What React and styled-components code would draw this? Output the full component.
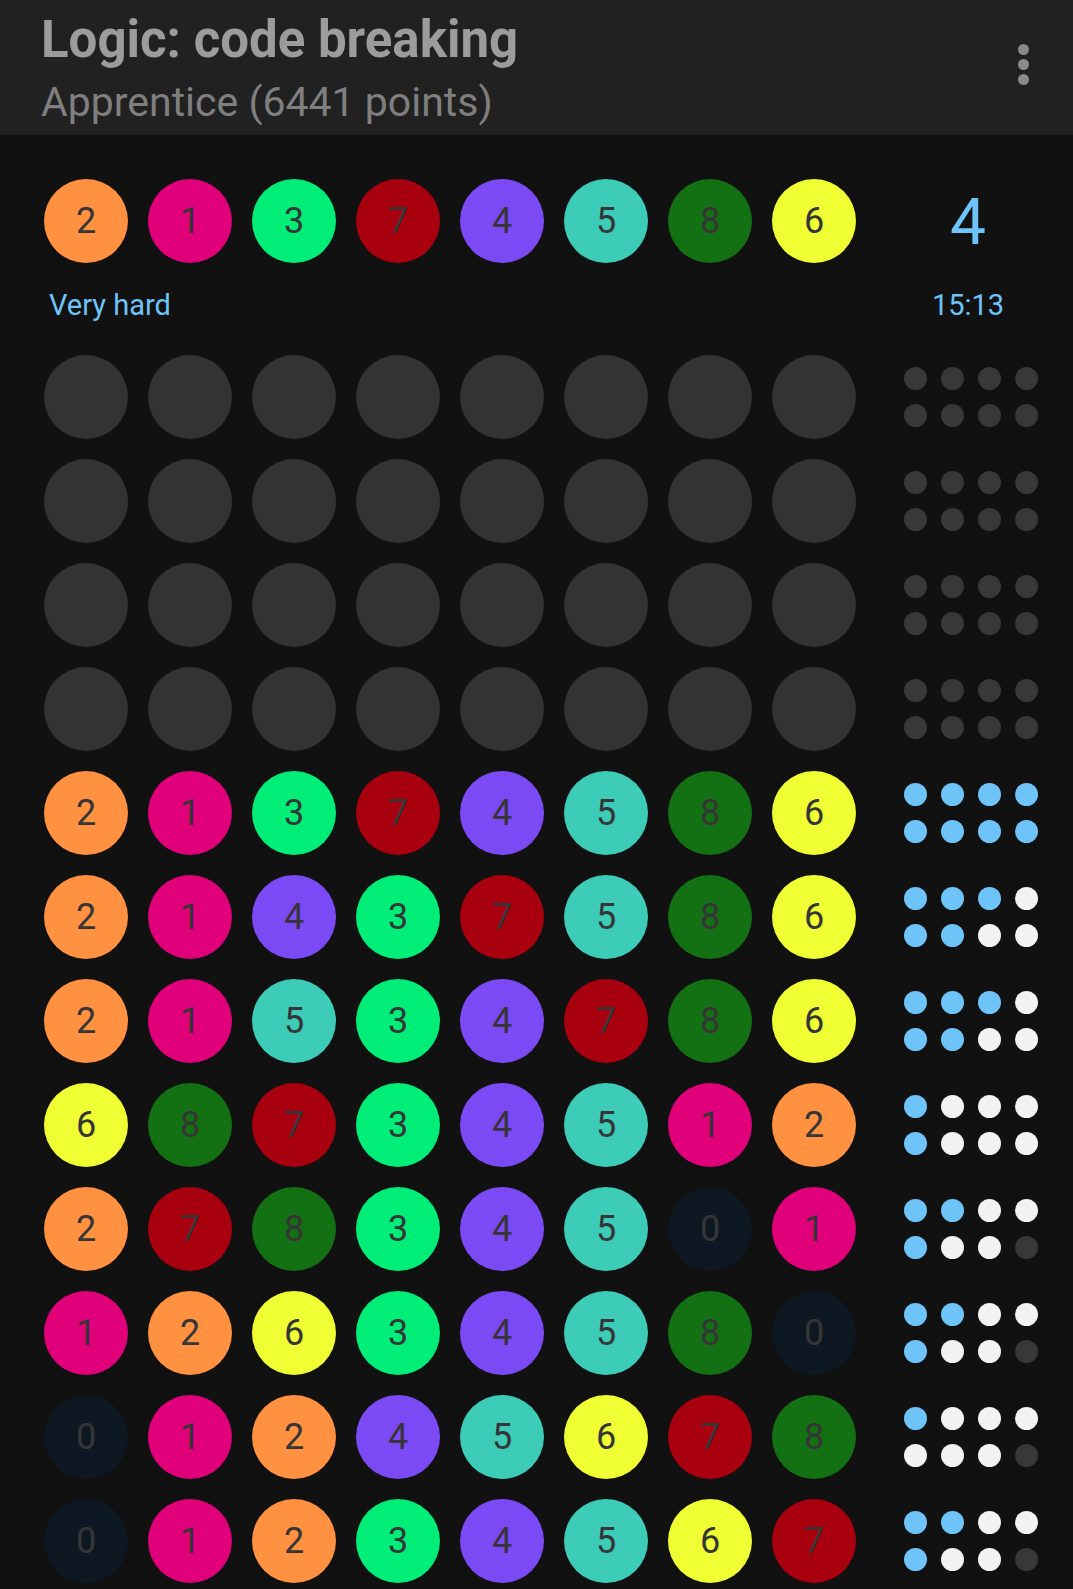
import React from "react";
import styled, { createGlobalStyle } from "styled-components";

const GlobalStyle = createGlobalStyle`
  html, body {
    margin: 0;
    padding: 0;
    background: #111111;
  }
  body {
    font-family: Roboto, "Noto Sans", "Liberation Sans", sans-serif;
  }
  * { box-sizing: border-box; }
`;

const PEG_COLORS = {
  0: "#0e1823",
  1: "#e0007a",
  2: "#ff9140",
  3: "#00ee77",
  4: "#7c4af5",
  5: "#3dccb8",
  6: "#efff33",
  7: "#a8000f",
  8: "#137013",
};

const FEEDBACK_COLORS = {
  b: "#6ec4f8",
  w: "#f2f2f2",
  g: "#383838",
};

const Page = styled.div`
  width: 1073px;
  min-height: 1589px;
  background: #111111;
`;

const Header = styled.header`
  height: 135px;
  background: #212121;
  display: flex;
  justify-content: space-between;
  align-items: flex-start;
  padding: 11px 44px 0 41px;
`;

const TitleBlock = styled.div`
  display: flex;
  flex-direction: column;
`;

const Title = styled.div`
  font-size: 51px;
  line-height: 58px;
  font-weight: 700;
  color: #9c9c9c;
`;

const Subtitle = styled.div`
  margin-top: 8px;
  font-size: 41px;
  line-height: 50px;
  font-weight: 400;
  color: #7f7f7f;
`;

const MenuButton = styled.div`
  margin-top: 33px;
  display: flex;
  flex-direction: column;
  gap: 4px;
`;

const MenuDot = styled.span`
  width: 11px;
  height: 11px;
  border-radius: 50%;
  background: #8a8a8a;
`;

const Board = styled.main`
  padding: 42px 0 0 44px;
  display: flex;
  flex-direction: column;
`;

const Row = styled.div`
  display: flex;
  align-items: center;
  margin-top: ${(p) => p.$gap || 0}px;
`;

const Pegs = styled.div`
  display: flex;
  gap: 20px;
`;

const Peg = styled.div`
  width: 84px;
  height: 84px;
  border-radius: 50%;
  background: ${(p) => p.$color};
  display: flex;
  align-items: center;
  justify-content: center;
  font-size: 36px;
  color: #363636;
  font-weight: 400;
`;

const Side = styled.div`
  width: 160px;
  margin-left: 32px;
  display: flex;
  justify-content: center;
  align-items: center;
`;

const Count = styled.div`
  font-size: 64px;
  line-height: 84px;
  padding-top: 4px;
  color: #6ec4f8;
`;

const InfoRow = styled.div`
  display: flex;
  align-items: center;
  margin-top: 22px;
  height: 36px;
`;

const Difficulty = styled.div`
  width: 812px;
  padding-left: 5px;
  font-size: 29px;
  line-height: 36px;
  color: #6ec4f8;
`;

const Timer = styled.div`
  font-size: 29px;
  line-height: 36px;
  color: #6ec4f8;
`;

const Feedback = styled.div`
  display: grid;
  grid-template-rows: repeat(2, 23px);
  grid-auto-flow: column;
  grid-auto-columns: 23px;
  gap: 14px;
  margin-left: 6px;
`;

const FeedbackDot = styled.span`
  width: 23px;
  height: 23px;
  border-radius: 50%;
  background: ${(p) => FEEDBACK_COLORS[p.$kind]};
`;

const code = [2, 1, 3, 7, 4, 5, 8, 6];

const guesses = [
  { pegs: [2, 1, 3, 7, 4, 5, 8, 6], fb: "bbbbbbbb" },
  { pegs: [2, 1, 4, 3, 7, 5, 8, 6], fb: "bbbbbwww" },
  { pegs: [2, 1, 5, 3, 4, 7, 8, 6], fb: "bbbbbwww" },
  { pegs: [6, 8, 7, 3, 4, 5, 1, 2], fb: "bbwwwwww" },
  { pegs: [2, 7, 8, 3, 4, 5, 0, 1], fb: "bbbwwwwg" },
  { pegs: [1, 2, 6, 3, 4, 5, 8, 0], fb: "bbbwwwwg" },
  { pegs: [0, 1, 2, 4, 5, 6, 7, 8], fb: "bwwwwwwg" },
  { pegs: [0, 1, 2, 3, 4, 5, 6, 7], fb: "bbbwwwwg" },
];

function PegRow({ pegs }) {
  return (
    <Pegs>
      {pegs.map((d, i) =>
        d === null ? (
          <Peg key={i} $color="#333333" />
        ) : (
          <Peg key={i} $color={PEG_COLORS[d]}>
            {d}
          </Peg>
        )
      )}
    </Pegs>
  );
}

function FeedbackGrid({ fb }) {
  return (
    <Feedback>
      {fb.split("").map((k, i) => (
        <FeedbackDot key={i} $kind={k} />
      ))}
    </Feedback>
  );
}

export default function App() {
  const empty = Array(8).fill(null);
  return (
    <Page>
      <GlobalStyle />
      <Header>
        <TitleBlock>
          <Title>Logic: code breaking</Title>
          <Subtitle>Apprentice (6441 points)</Subtitle>
        </TitleBlock>
        <MenuButton>
          <MenuDot />
          <MenuDot />
          <MenuDot />
        </MenuButton>
      </Header>
      <Board>
        <Row>
          <PegRow pegs={code} />
          <Side>
            <Count>4</Count>
          </Side>
        </Row>
        <InfoRow>
          <Difficulty>Very hard</Difficulty>
          <Side>
            <Timer>15:13</Timer>
          </Side>
        </InfoRow>
        {[0, 1, 2, 3].map((i) => (
          <Row key={"e" + i} $gap={i === 0 ? 32 : 20}>
            <PegRow pegs={empty} />
            <Side>
              <FeedbackGrid fb="gggggggg" />
            </Side>
          </Row>
        ))}
        {guesses.map((g, i) => (
          <Row key={i} $gap={20}>
            <PegRow pegs={g.pegs} />
            <Side>
              <FeedbackGrid fb={g.fb} />
            </Side>
          </Row>
        ))}
      </Board>
    </Page>
  );
}
